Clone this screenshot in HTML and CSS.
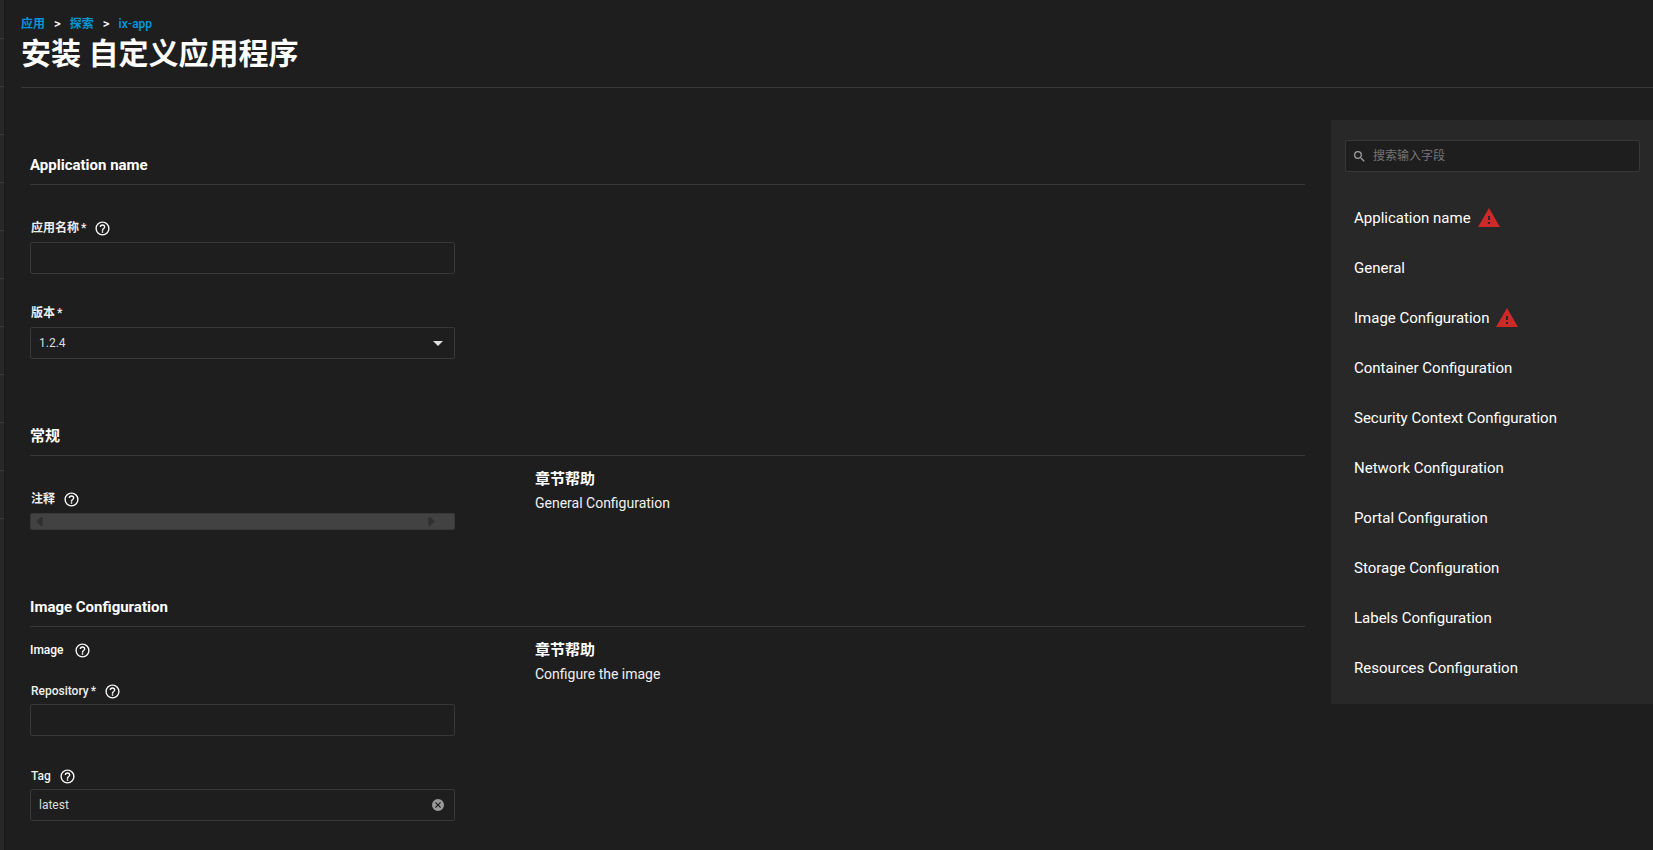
FILE: index.html
```html
<!DOCTYPE html>
<html lang="zh-CN">
<head>
<meta charset="utf-8">
<title>安装 自定义应用程序</title>
<link rel="stylesheet" href="styles.css">
</head>
<body>
<svg class="sprite" aria-hidden="true">
  <symbol id="help" viewBox="0 0 24 24"><path d="M11,18H13V16H11V18M12,2A10,10 0 0,0 2,12A10,10 0 0,0 12,22A10,10 0 0,0 22,12A10,10 0 0,0 12,2M12,20C7.59,20 4,16.41 4,12C4,7.59 7.59,4 12,4C16.41,4 20,7.59 20,12C20,16.41 16.41,20 12,20M12,6A4,4 0 0,0 8,10H10A2,2 0 0,1 12,8A2,2 0 0,1 14,10C14,12 11,11.75 11,15H13C13,12.75 16,12.5 16,10A4,4 0 0,0 12,6Z"/></symbol>
  <symbol id="warning" viewBox="0 0 24 24"><path d="M1 21h22L12 2 1 21zm12-3h-2v-2h2v2zm0-4h-2v-4h2v4z"/></symbol>
</svg>
<div class="app">
  <ul class="rail" aria-hidden="true">
    <li></li><li></li><li></li><li></li><li></li><li></li><li></li><li></li><li></li><li></li><li></li>
  </ul>
  <div class="page">
    <header class="page-header">
      <nav class="crumbs" aria-label="breadcrumb">
        <a href="#">应用</a><span>&gt;</span><a href="#">探索</a><span>&gt;</span><a href="#">ix-app</a>
      </nav>
      <h1>安装 自定义应用程序</h1>
    </header>
    <div class="layout">
      <form class="form">
        <section class="section">
          <h2>Application name</h2>
          <div class="section-body">
            <div class="fields fields-spaced">
              <div class="field">
                <div class="label-row zh"><label for="name">应用名称<span class="req">*</span></label><button type="button" class="help-btn" aria-label="help"><svg><use href="#help"/></svg></button></div>
                <input class="control" id="name" type="text">
              </div>
              <div class="field">
                <div class="label-row zh"><label for="version">版本<span class="req">*</span></label></div>
                <div class="control-wrap">
                  <select class="control" id="version"><option>1.2.4</option></select>
                  <svg class="caret" viewBox="0 0 10 5"><path d="M0 0h10L5 5z"/></svg>
                </div>
              </div>
            </div>
          </div>
        </section>
        <section class="section">
          <h2>常规</h2>
          <div class="section-body">
            <div class="fields fields-spaced">
              <div class="field">
                <div class="label-row zh"><label for="notes">注释</label><button type="button" class="help-btn" aria-label="help"><svg><use href="#help"/></svg></button></div>
                <div class="control-wrap">
                  <textarea class="notes" id="notes" rows="1"></textarea>
                  <svg class="arrow arrow-left" viewBox="0 0 7 10"><path d="M7 0v10H5L0 5l5-5z"/></svg>
                  <svg class="arrow arrow-right" viewBox="0 0 7 10"><path d="M0 0v10h2l5-5-5-5z"/></svg>
                </div>
              </div>
            </div>
            <div class="section-help"><h3>章节帮助</h3><p>General Configuration</p></div>
          </div>
        </section>
        <section class="section">
          <h2>Image Configuration</h2>
          <div class="section-body">
            <div class="fields">
              <div class="group-label">Image<button type="button" class="help-btn" aria-label="help"><svg><use href="#help"/></svg></button></div>
              <div class="field">
                <div class="label-row"><label for="repo">Repository<span class="req">*</span></label><button type="button" class="help-btn" aria-label="help"><svg><use href="#help"/></svg></button></div>
                <input class="control" id="repo" type="text">
              </div>
              <div class="field">
                <div class="label-row"><label for="tag">Tag</label><button type="button" class="help-btn" aria-label="help"><svg><use href="#help"/></svg></button></div>
                <div class="control-wrap">
                  <input class="control" id="tag" type="text" value="latest">
                  <button type="button" class="clear" aria-label="clear"><svg viewBox="2 2 20 20"><path d="M12 2a10 10 0 1 0 0 20 10 10 0 0 0 0-20zm5 13.600L15.600 17 12 13.400 8.400 17 7 15.600 10.600 12 7 8.400 8.400 7 12 10.600 15.600 7 17 8.400 13.400 12z"/></svg></button>
                </div>
              </div>
            </div>
            <div class="section-help"><h3>章节帮助</h3><p>Configure the image</p></div>
          </div>
        </section>
      </form>
      <aside class="side">
        <div class="search">
          <svg viewBox="3 3 18 18"><path d="M15.500 14h-.79l-.28-.27A6.470 6.470 0 0 0 16 9.500 6.500 6.500 0 1 0 9.500 16c1.610 0 3.090-.59 4.230-1.570l.27.28v.79l5 4.990L20.490 19l-4.990-5zm-6 0C7.010 14 5 11.990 5 9.500S7.010 5 9.500 5 14 7.010 14 9.500 11.990 14 9.500 14z"/></svg>
          <input type="search" placeholder="搜索输入字段" aria-label="搜索输入字段">
        </div>
        <nav class="links">
          <a href="#">Application name<svg><use href="#warning"/></svg></a>
          <a href="#">General</a>
          <a href="#">Image Configuration<svg><use href="#warning"/></svg></a>
          <a href="#">Container Configuration</a>
          <a href="#">Security Context Configuration</a>
          <a href="#">Network Configuration</a>
          <a href="#">Portal Configuration</a>
          <a href="#">Storage Configuration</a>
          <a href="#">Labels Configuration</a>
          <a href="#">Resources Configuration</a>
        </nav>
      </aside>
    </div>
  </div>
</div>
</body>
</html>
```
FILE: styles.css
```css
* { box-sizing: border-box; }
body {
  margin: 0;
  background: #1e1e1e;
  color: #fff;
  font-family: Roboto, "Noto Sans CJK SC", sans-serif;
  font-size: 12px;
}
h1, h2, h3, p, ul { margin: 0; padding: 0; }
button, input, select, textarea { font: inherit; color: inherit; }
svg { display: block; fill: currentColor; }
.sprite { position: absolute; width: 0; height: 0; }

.app { display: flex; min-height: 100vh; }
.rail {
  flex: none;
  width: 5px;
  padding-top: 39px;
  margin-top: -48px;
  background: #282828;
  border-right: 1px solid #1a1a1a;
  list-style: none;
}
.rail li { height: 48px; border-bottom: 1px solid #383838; }
.page { flex: 1; min-width: 0; }

.page-header {
  margin-left: 16px;
  padding: 16px 0 13px;
  border-bottom: 1px solid #383838;
}
.crumbs { display: flex; gap: 9px; line-height: 16px; font-weight: 600; }
.crumbs span { font-size: 13px; font-weight: 500; }
.crumbs a { color: #0095d5; text-decoration: none; }
h1 { margin-top: 2px; font-size: 30px; line-height: 40px; font-weight: 700; }

.layout { display: flex; align-items: flex-start; gap: 26px; padding-top: 32px; }
.form {
  flex: 1;
  min-width: 0;
  display: flex;
  flex-direction: column;
  gap: 65px;
  padding: 33px 0 28px 25px;
}
.section h2 {
  padding-bottom: 7px;
  border-bottom: 1px solid #383838;
  font-size: 15px;
  line-height: 24px;
  font-weight: 700;
}
.section-body { display: flex; gap: 80px; }
.fields {
  flex: none;
  width: 33.33%;
  padding-top: 13px;
  display: flex;
  flex-direction: column;
  gap: 30px;
}
.fields-spaced { padding-top: 34px; }
.field { display: flex; flex-direction: column; gap: 3px; }
.label-row, .group-label {
  display: flex;
  align-items: center;
  gap: 8px;
  height: 20px;
  font-weight: 500;
}
.label-row { padding-left: 1px; color: #eee; }
.label-row label { line-height: 16px; }
.zh { padding-bottom: 2px; font-weight: 600; }
.group-label { margin-bottom: -9px; gap: 10px; }
.req { margin-left: 2px; }
.help-btn { padding: 0; border: 0; background: none; color: #fff; }
.help-btn svg { width: 17px; height: 17px; }
.control-wrap { position: relative; }
.control {
  display: block;
  width: 100%;
  height: 32px;
  padding: 0 8px;
  border: 1px solid #383838;
  border-radius: 2px;
  background: #1e1e1e;
  color: #ddd;
  appearance: none;
}
.caret { position: absolute; right: 12px; top: 14px; width: 10px; height: 5px; fill: #e0e0e0; }
.notes {
  display: block;
  width: 100%;
  height: 17px;
  padding: 0 8px;
  border: 1px solid #383838;
  border-radius: 2px;
  background: #424242;
  resize: none;
  overflow: hidden;
}
.arrow { position: absolute; top: 4px; width: 7px; height: 9px; fill: #303030; }
.arrow-left { left: 6px; }
.arrow-right { right: 20px; }
.clear {
  position: absolute;
  right: 11px;
  top: 10px;
  padding: 0;
  border: 0;
  background: none;
  color: #9a9a9a;
}
.clear svg { width: 12px; height: 12px; }
.section-help { padding-top: 11px; }
.section-help h3 { font-size: 15px; line-height: 24px; }
.section-help p { margin-top: 2px; font-size: 14px; line-height: 20px; color: #f0f0f0; }

.side { flex: none; width: 322px; padding: 20px 13px 11px 14px; background: #282828; }
.search {
  display: flex;
  align-items: center;
  gap: 8px;
  height: 32px;
  padding: 0 8px;
  border: 1px solid #383838;
  border-radius: 2px;
  background: #1e1e1e;
  color: #a0a0a0;
}
.search svg { flex: none; width: 11px; height: 11px; }
.search input { flex: 1; min-width: 0; padding: 0; border: 0; outline: 0; background: none; }
.search input::placeholder { color: #757575; }
.links { margin-top: 21px; padding-left: 9px; }
.links a {
  display: flex;
  align-items: center;
  gap: 6px;
  height: 50px;
  color: #fff;
  font-size: 15px;
  text-decoration: none;
}
.links svg { width: 24px; height: 24px; fill: #ce2929; }
```
